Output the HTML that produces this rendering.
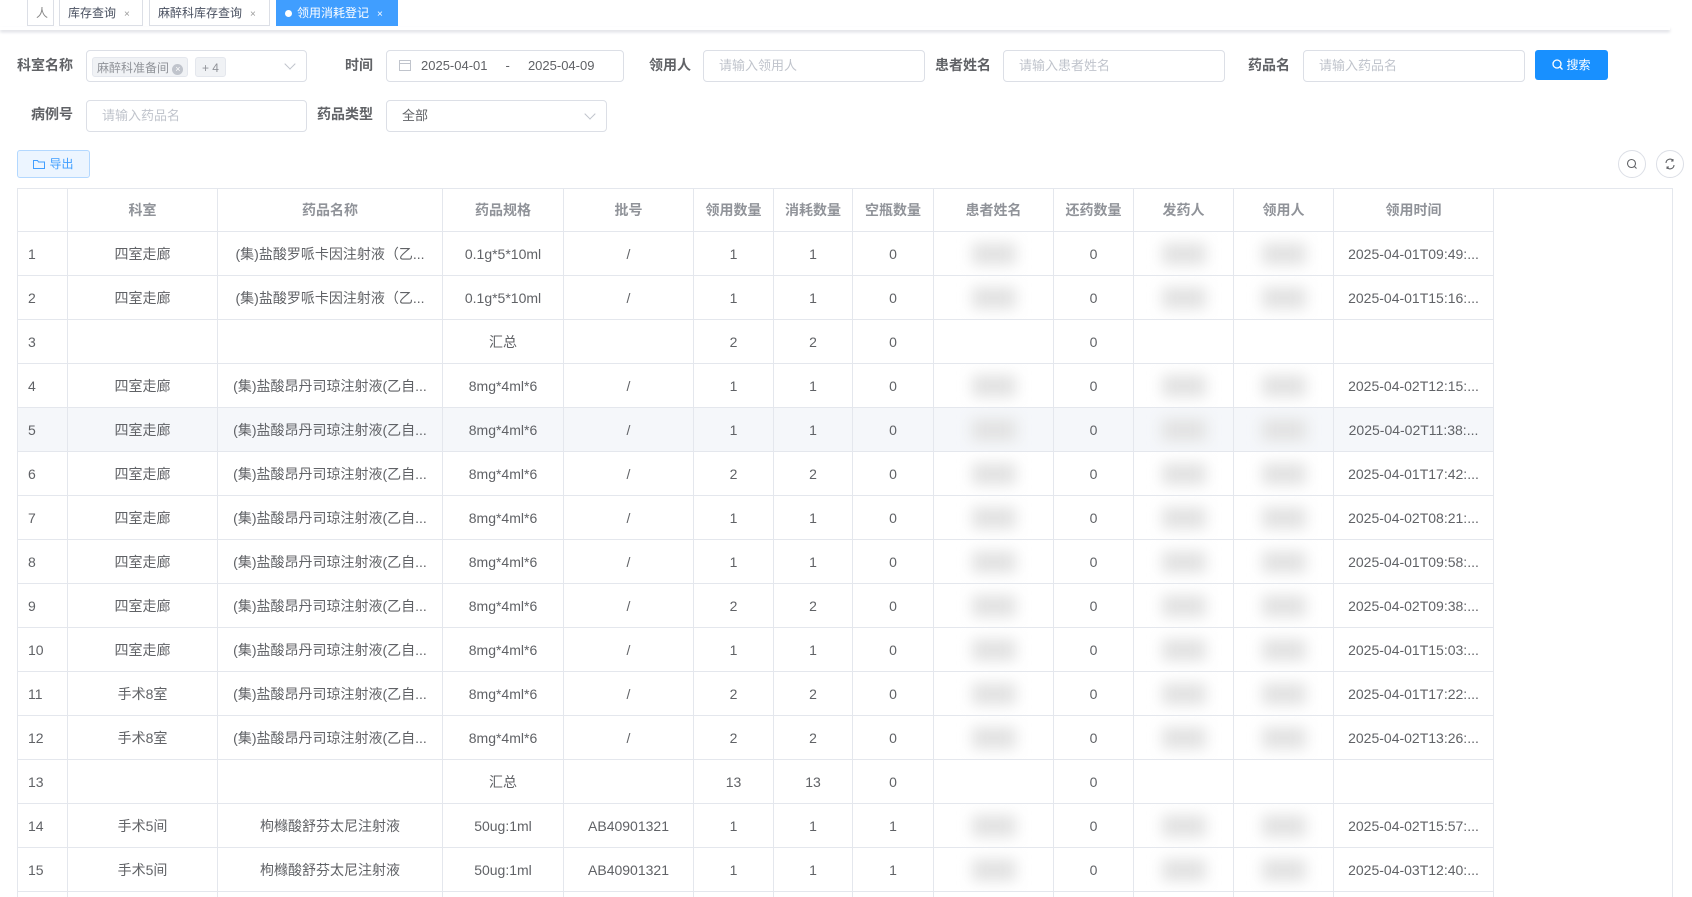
<!DOCTYPE html><html><head><meta charset="utf-8"><style>
*{box-sizing:border-box;margin:0;padding:0}
html,body{width:1692px;height:897px;overflow:hidden}
body{background:#fff;font-family:"Liberation Sans","Noto Sans CJK SC",sans-serif;color:#606266;font-size:14px;position:relative}
#w{position:absolute;left:0;top:0;width:1692px;height:897px;overflow:hidden}
.a{position:absolute}
.tab{position:absolute;top:0;height:26px;border:1px solid #dcdfe6;border-top:none;font-size:12px;color:#495060;line-height:26px;padding-left:8px}
.tab i{font-style:normal;color:#999;font-size:10px;margin-left:8px}
.lab{position:absolute;font-weight:bold;font-size:14px;color:#606266;line-height:20px}
.inp{position:absolute;height:32px;border:1px solid #dcdfe6;border-radius:4px;font-size:13px;color:#c0c4cc;line-height:30px;padding-left:15px;background:#fff}
.chev{position:absolute;right:12px;top:9px;width:8px;height:8px;border-right:1px solid #c0c4cc;border-bottom:1px solid #c0c4cc;transform:rotate(45deg)}
table{border-collapse:collapse;table-layout:fixed;position:absolute;left:17px;top:188px}
td,th{border:1px solid #e4e7ed;height:44px;text-align:center;font-size:14px;color:#606266;white-space:nowrap;overflow:hidden;text-overflow:ellipsis;padding:0 10px}
th{height:43px;color:#909399;font-weight:bold}
td:first-child{text-align:left}
.b{display:inline-block;width:44px;height:22px;background:#e2e2e2;filter:blur(7px);vertical-align:middle}
tr.h td{background:#f5f7fa}
</style></head><body><div id="w">
<div class="a" style="left:0;top:27px;width:1670px;height:3px;box-shadow:0 2px 3px #d8dae0;background:#fff"></div>
<div class="tab" style="left:27px;width:27px;color:#888;">人</div>
<div class="tab" style="left:59px;width:84px">库存查询<i>×</i></div>
<div class="tab" style="left:149px;width:121px">麻醉科库存查询<i>×</i></div>
<div class="tab" style="left:276px;width:122px;background:#409eff;border-color:#409eff;color:#fff"><span style="display:inline-block;width:7px;height:7px;border-radius:50%;background:#fff;margin-right:5px"></span>领用消耗登记<i style="color:#fff">×</i></div>

<div class="lab" style="left:17px;top:55px">科室名称</div>
<div class="inp" style="left:86px;top:50px;width:221px;padding-left:5px">
<span style="display:inline-block;height:20px;line-height:20px;background:#f0f2f5;border:1px solid #e4e7ed;border-radius:3px;color:#909399;font-size:12px;padding:0 4px;vertical-align:middle">麻醉科准备间 <span style="display:inline-block;width:11px;height:11px;border-radius:50%;background:#c0c4cc;color:#fff;font-size:9px;line-height:11px;text-align:center">×</span></span>
<span style="display:inline-block;height:20px;line-height:20px;background:#f0f2f5;border:1px solid #e4e7ed;border-radius:3px;color:#909399;font-size:12px;padding:0 6px;vertical-align:middle;margin-left:3px">+ 4</span><span class="chev"></span></div>
<div class="lab" style="left:345px;top:55px">时间</div>
<div class="inp" style="left:386px;top:50px;width:238px;color:#606266;padding-left:12px"><svg width="12" height="12" style="margin-right:10px;vertical-align:-1px"><rect x="0.5" y="1.5" width="11" height="10" fill="none" stroke="#c0c4cc"/><line x1="0" y1="4.5" x2="12" y2="4.5" stroke="#c0c4cc"/></svg>2025-04-01 &nbsp;&nbsp;&nbsp;&nbsp;- &nbsp;&nbsp;&nbsp;&nbsp;2025-04-09</div>
<div class="lab" style="left:649px;top:55px">领用人</div>
<div class="inp" style="left:703px;top:50px;width:222px">请输入领用人</div>
<div class="lab" style="left:935px;top:55px">患者姓名</div>
<div class="inp" style="left:1003px;top:50px;width:222px">请输入患者姓名</div>
<div class="lab" style="left:1248px;top:55px">药品名</div>
<div class="inp" style="left:1303px;top:50px;width:222px">请输入药品名</div>
<div class="a" style="left:1535px;top:50px;width:73px;height:30px;background:#1890ff;border-radius:3px;color:#fff;font-size:12px;line-height:30px;text-align:center"><svg width="11" height="11" style="vertical-align:-1px;margin-right:3px"><circle cx="5" cy="5" r="4" fill="none" stroke="#fff" stroke-width="1.3"/><line x1="8" y1="8" x2="10.5" y2="10.5" stroke="#fff" stroke-width="1.3"/></svg>搜索</div>

<div class="lab" style="left:31px;top:104px">病例号</div>
<div class="inp" style="left:86px;top:100px;width:221px">请输入药品名</div>
<div class="lab" style="left:317px;top:104px">药品类型</div>
<div class="inp" style="left:386px;top:100px;width:221px;color:#606266">全部<span class="chev"></span></div>

<div class="a" style="left:17px;top:150px;width:73px;height:28px;background:#ecf5ff;border:1px solid #b3d8ff;border-radius:3px;color:#409eff;font-size:12px;line-height:26px;text-align:center"><svg width="12" height="10" style="vertical-align:-1px;margin-right:4px"><path d="M0.5 1.5h4l1 1.5h6v6.5h-11z" fill="none" stroke="#409eff"/></svg>导出</div>
<div class="a" style="left:1618px;top:150px;width:28px;height:28px;border:1px solid #dcdfe6;border-radius:50%"><svg width="26" height="26"><circle cx="12.5" cy="12.5" r="4" fill="none" stroke="#606266" stroke-width="1.1"/><line x1="15.5" y1="15.5" x2="17.5" y2="17.5" stroke="#606266" stroke-width="1.1"/></svg></div>
<div class="a" style="left:1656px;top:150px;width:28px;height:28px;border:1px solid #dcdfe6;border-radius:50%"><svg width="26" height="26"><path d="M9 12a4 4 0 0 1 7-2.5M17 14a4 4 0 0 1-7 2.5" fill="none" stroke="#606266" stroke-width="1.1"/><path d="M16 8v2h-2M10 18v-2h2" fill="none" stroke="#606266" stroke-width="1"/></svg></div>

<div class="a" style="left:17px;top:188px;width:1656px;height:720px;border:1px solid #e4e7ed"></div>
<table>
<colgroup><col style="width:50px"><col style="width:150px"><col style="width:225px"><col style="width:121px"><col style="width:130px"><col style="width:80px"><col style="width:79px"><col style="width:81px"><col style="width:120px"><col style="width:80px"><col style="width:100px"><col style="width:100px"><col style="width:160px"></colgroup>
<tr><th></th><th>科室</th><th>药品名称</th><th>药品规格</th><th>批号</th><th>领用数量</th><th>消耗数量</th><th>空瓶数量</th><th>患者姓名</th><th>还药数量</th><th>发药人</th><th>领用人</th><th>领用时间</th></tr>
<tr><td>1</td><td>四室走廊</td><td>(集)盐酸罗哌卡因注射液（乙...</td><td>0.1g*5*10ml</td><td>/</td><td>1</td><td>1</td><td>0</td><td><span class="b"></span></td><td>0</td><td><span class="b"></span></td><td><span class="b"></span></td><td>2025-04-01T09:49:...</td></tr>
<tr><td>2</td><td>四室走廊</td><td>(集)盐酸罗哌卡因注射液（乙...</td><td>0.1g*5*10ml</td><td>/</td><td>1</td><td>1</td><td>0</td><td><span class="b"></span></td><td>0</td><td><span class="b"></span></td><td><span class="b"></span></td><td>2025-04-01T15:16:...</td></tr>
<tr><td>3</td><td></td><td></td><td>汇总</td><td></td><td>2</td><td>2</td><td>0</td><td></td><td>0</td><td></td><td></td><td></td></tr>
<tr><td>4</td><td>四室走廊</td><td>(集)盐酸昂丹司琼注射液(乙自...</td><td>8mg*4ml*6</td><td>/</td><td>1</td><td>1</td><td>0</td><td><span class="b"></span></td><td>0</td><td><span class="b"></span></td><td><span class="b"></span></td><td>2025-04-02T12:15:...</td></tr>
<tr class="h"><td>5</td><td>四室走廊</td><td>(集)盐酸昂丹司琼注射液(乙自...</td><td>8mg*4ml*6</td><td>/</td><td>1</td><td>1</td><td>0</td><td><span class="b"></span></td><td>0</td><td><span class="b"></span></td><td><span class="b"></span></td><td>2025-04-02T11:38:...</td></tr>
<tr><td>6</td><td>四室走廊</td><td>(集)盐酸昂丹司琼注射液(乙自...</td><td>8mg*4ml*6</td><td>/</td><td>2</td><td>2</td><td>0</td><td><span class="b"></span></td><td>0</td><td><span class="b"></span></td><td><span class="b"></span></td><td>2025-04-01T17:42:...</td></tr>
<tr><td>7</td><td>四室走廊</td><td>(集)盐酸昂丹司琼注射液(乙自...</td><td>8mg*4ml*6</td><td>/</td><td>1</td><td>1</td><td>0</td><td><span class="b"></span></td><td>0</td><td><span class="b"></span></td><td><span class="b"></span></td><td>2025-04-02T08:21:...</td></tr>
<tr><td>8</td><td>四室走廊</td><td>(集)盐酸昂丹司琼注射液(乙自...</td><td>8mg*4ml*6</td><td>/</td><td>1</td><td>1</td><td>0</td><td><span class="b"></span></td><td>0</td><td><span class="b"></span></td><td><span class="b"></span></td><td>2025-04-01T09:58:...</td></tr>
<tr><td>9</td><td>四室走廊</td><td>(集)盐酸昂丹司琼注射液(乙自...</td><td>8mg*4ml*6</td><td>/</td><td>2</td><td>2</td><td>0</td><td><span class="b"></span></td><td>0</td><td><span class="b"></span></td><td><span class="b"></span></td><td>2025-04-02T09:38:...</td></tr>
<tr><td>10</td><td>四室走廊</td><td>(集)盐酸昂丹司琼注射液(乙自...</td><td>8mg*4ml*6</td><td>/</td><td>1</td><td>1</td><td>0</td><td><span class="b"></span></td><td>0</td><td><span class="b"></span></td><td><span class="b"></span></td><td>2025-04-01T15:03:...</td></tr>
<tr><td>11</td><td>手术8室</td><td>(集)盐酸昂丹司琼注射液(乙自...</td><td>8mg*4ml*6</td><td>/</td><td>2</td><td>2</td><td>0</td><td><span class="b"></span></td><td>0</td><td><span class="b"></span></td><td><span class="b"></span></td><td>2025-04-01T17:22:...</td></tr>
<tr><td>12</td><td>手术8室</td><td>(集)盐酸昂丹司琼注射液(乙自...</td><td>8mg*4ml*6</td><td>/</td><td>2</td><td>2</td><td>0</td><td><span class="b"></span></td><td>0</td><td><span class="b"></span></td><td><span class="b"></span></td><td>2025-04-02T13:26:...</td></tr>
<tr><td>13</td><td></td><td></td><td>汇总</td><td></td><td>13</td><td>13</td><td>0</td><td></td><td>0</td><td></td><td></td><td></td></tr>
<tr><td>14</td><td>手术5间</td><td>枸橼酸舒芬太尼注射液</td><td>50ug:1ml</td><td>AB40901321</td><td>1</td><td>1</td><td>1</td><td><span class="b"></span></td><td>0</td><td><span class="b"></span></td><td><span class="b"></span></td><td>2025-04-02T15:57:...</td></tr>
<tr><td>15</td><td>手术5间</td><td>枸橼酸舒芬太尼注射液</td><td>50ug:1ml</td><td>AB40901321</td><td>1</td><td>1</td><td>1</td><td><span class="b"></span></td><td>0</td><td><span class="b"></span></td><td><span class="b"></span></td><td>2025-04-03T12:40:...</td></tr>
<tr><td></td><td></td><td></td><td></td><td></td><td></td><td></td><td></td><td></td><td></td><td></td><td></td><td></td></tr>
</table>
</div></body></html>
